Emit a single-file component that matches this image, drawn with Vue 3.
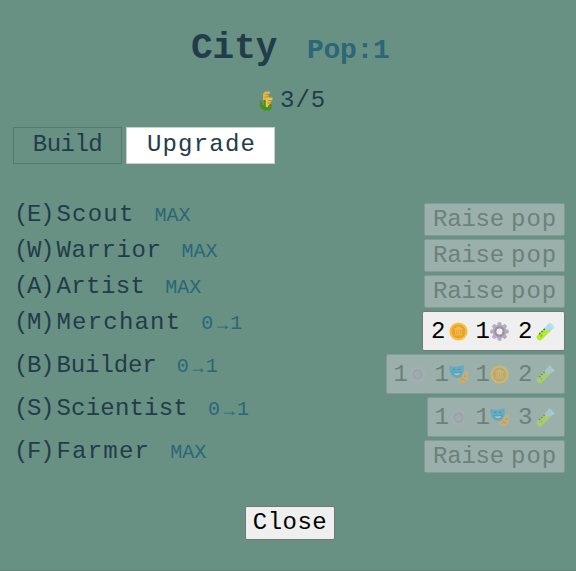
<script setup>
const units = [
  { key: 'E', name: 'Scout', track: 1.2, level: 'MAX' },
  { key: 'W', name: 'Warrior', track: 0.6, level: 'MAX' },
  { key: 'A', name: 'Artist', track: 0.4, level: 'MAX' },
  { key: 'M', name: 'Merchant', track: 1.2, level: 'up', enabled: true, cost: [[2, 'coin'], [1, 'gear'], [2, 'tube']] },
  { key: 'B', name: 'Builder', track: -0.1, level: 'up', cost: [[1, 'gear'], [1, 'masks'], [1, 'coin'], [2, 'tube']] },
  { key: 'S', name: 'Scientist', track: 0.2, level: 'up', cost: [[1, 'gear'], [1, 'masks'], [3, 'tube']] },
  { key: 'F', name: 'Farmer', track: 1.2, level: 'MAX' },
]
const teeth = [0, 45, 90, 135, 180, 225, 270, 315]
</script>

<template>
  <main class="city">
    <header class="head">
      <h1>City</h1>
      <span class="pop">Pop:1</span>
    </header>
    <div class="food">
      <svg class="corn" viewBox="0 0 14 20">
        <path d="M4 9V3l2-2.500h5V2L9.500 4v5z" fill="#e0b545" />
        <path d="M6.500 16V9L8 6.500h5.500v2l-2 3V16z" fill="#f2c240" />
        <path d="M6.500 3.500h4M6 6h3M9 9.500h4M8.500 12h3" stroke="#a58c3c" stroke-width=".9" />
        <path d="M.8 9.500h1.700L3.500 14H5V9h1.500v7H9v-1l2-2h1.500v4.500L11 19.500H5.500L2 17.500l-1.200-2z" fill="#47911f" />
      </svg>
      <span>3/5</span>
    </div>
    <nav class="tabs">
      <button class="tab build">Build</button>
      <button class="tab upgrade active">Upgrade</button>
    </nav>

    <section class="units">
      <div v-for="u in units" :key="u.key" class="row" :class="{ tall: u.cost }">
        <span class="hotkey">({{ u.key }})</span>
        <span class="name" :style="{ letterSpacing: u.track + 'px' }">{{ u.name }}</span>
        <span v-if="u.level === 'MAX'" class="level">MAX</span>
        <span v-else class="level next"><i>0</i><b>→</b><i>1</i></span>

        <button v-if="u.cost" class="btn cost" :class="{ off: !u.enabled }">
          <span v-for="(c, n) in u.cost" :key="n" class="item">
            <span class="num" :class="{ one: c[0] === 1 }">{{ c[0] }}</span>
            <svg class="icon" :class="c[1]" viewBox="0 0 20 20">
              <g v-if="c[1] === 'coin'">
                <circle cx="10" cy="10" r="9.600" fill="#f9c23c" />
                <circle cx="10" cy="10" r="7.400" fill="#e6a038" />
                <path d="M5.800 7.500L10 5l4.200 2.500zM7 8.500v4M9 8.500v4M11 8.500v4M13 8.500v4M5.800 13.600h8.400" fill="#f9c23c" stroke="#f9c23c" stroke-width="1" />
              </g>
              <g v-else-if="c[1] === 'gear'">
                <rect v-for="a in teeth" :key="a" x="7.9" y="0.3" width="4.2" height="6" rx="1.3" fill="#b4acbc" :transform="`rotate(${a} 10 10)`" />
                <circle cx="10" cy="10" r="5.300" fill="none" stroke="#b4acbc" stroke-width="4" />
                <circle cx="10" cy="10" r="4.400" fill="none" stroke="#998fa5" stroke-width="2" />
              </g>
              <g v-else-if="c[1] === 'masks'">
                <path d="M8.500 8.500q6 .5 11-2l.4 1v6q-.8 5-5 5.700-4 0-5.700-4z" fill="#f3ad45" />
                <path d="M12 16.200q2.500-3 5 0M11.500 12.500h2M16 11.700h2" fill="none" stroke="#bd7a2c" stroke-width="1" />
                <path d="M.3.800q3 1.500 7.500 1T15.300.300q.700 5-.5 8.700-2 4.500-6 4.800Q3.500 13.300 1.800 9 .2 5 .3.800z" fill="#26a9e0" />
                <path d="M4 5q1.300-1.300 2.600 0M9.500 5q1.300-1.300 2.600 0" fill="none" stroke="#19648c" stroke-width="1" />
                <path d="M4 8q4.500 1.300 8.700-.5-.6 3.700-4.200 4Q5 11.400 4 8z" fill="#b9e1f3" stroke="#19729f" stroke-width=".8" />
              </g>
              <g v-else>
                <path d="M4 16L15 5" stroke="#b8e92f" stroke-width="6.500" stroke-linecap="round" />
                <path d="M9.500 5.700l4-4 5 5-2.700 1.600-6.800.6z" fill="#aadcff" />
                <path d="M12.800 1.200L14 .2l5.700 5.600-1.200 1.300z" fill="#b9e2ff" />
                <path d="M3.300 12.800L9.300 7.200" stroke="#34863c" stroke-width="1.600" stroke-dasharray="1.700 1.500" />
                <circle cx="5.600" cy="14.500" r="1" fill="#6fb82c" />
              </g>
            </svg>
          </span>
        </button>
        <button v-else class="btn raise off"><span class="verb">Raise</span><span class="noun">pop</span></button>
      </div>
    </section>

    <footer class="foot"><button class="btn close">Close</button></footer>
  </main>
</template>

<style>
body { background: #689184; }
</style>

<style scoped>
.city {
  box-sizing: border-box;
  width: 576px;
  height: 571px;
  padding: 29px 11px 0 13px;
  background: #689184;
  border-bottom: 1px solid #5f857a;
  color: #223c4a;
  font: 24px/24px "Liberation Mono", monospace;
  overflow: hidden;
}
button { font: inherit; color: inherit; margin: 0; box-sizing: border-box; }
.head { display: flex; align-items: baseline; padding-left: 178px; height: 60px; }
h1 { margin: 0; width: 116px; font-size: 36px; line-height: 39px; font-weight: 700; }
.pop { color: #2a6777; font-size: 28px; font-weight: 700; letter-spacing: -.3px; }
.food { display: flex; align-items: center; gap: 7px; padding-left: 246px; height: 24px; margin-bottom: 14px; letter-spacing: 1px; }
.corn { width: 14px; height: 20px; }
.tabs { display: flex; gap: 4px; height: 37px; }
.tab { padding: 0 0 2px; border: 1px solid #527a70; background: transparent; white-space: nowrap; }
.build { width: 109px; letter-spacing: -.5px; }
.upgrade { width: 149px; padding-left: 2px; letter-spacing: 1.2px; }
.active { background: #fff; border-color: #c8cfcc; }
.units { padding-top: 39px; }
.row { display: flex; align-items: flex-start; height: 36px; white-space: nowrap; }
.row.tall { height: 43px; }
.hotkey { width: 43px; letter-spacing: -1.4px; text-indent: 1px; }
.name { text-indent: .5px; }
.level { margin-left: 20px; color: #2a6777; font-size: 20px; line-height: 26px; }
.next { display: flex; }
.level i { width: 12px; font-style: normal; }
.level b { width: 18px; font: 18px/27px "Liberation Serif", serif; text-align: center; }
.next i:last-child { text-indent: -1px; }
.btn { border: 1px solid #767676; border-radius: 2px; background: #efefef; color: #000; }
.off { border-color: #809d95; background: #9bb0aa; color: #6c817b; }
.row .btn { margin-left: auto; }
.raise { display: flex; align-items: center; width: 141px; height: 33px; padding: 0 0 0 8px; }
.verb { width: 78px; text-align: left; letter-spacing: -.2px; }
.noun { letter-spacing: 1px; }
.cost { display: flex; align-items: center; gap: 9px; height: 40px; padding: 1px 9px 0 8px; }
.item { display: flex; align-items: center; }
.num { width: 18px; text-align: left; text-indent: 0; }
.one { width: 13px; text-indent: -1.5px; }
.icon { width: 19px; height: 19px; }
.off .icon { opacity: .5; }
.off .gear { opacity: .35; }
.foot { display: flex; justify-content: center; padding: 30px 0 0 2px; }
.close { width: 90px; height: 34px; padding: 0; letter-spacing: .5px; }
</style>
